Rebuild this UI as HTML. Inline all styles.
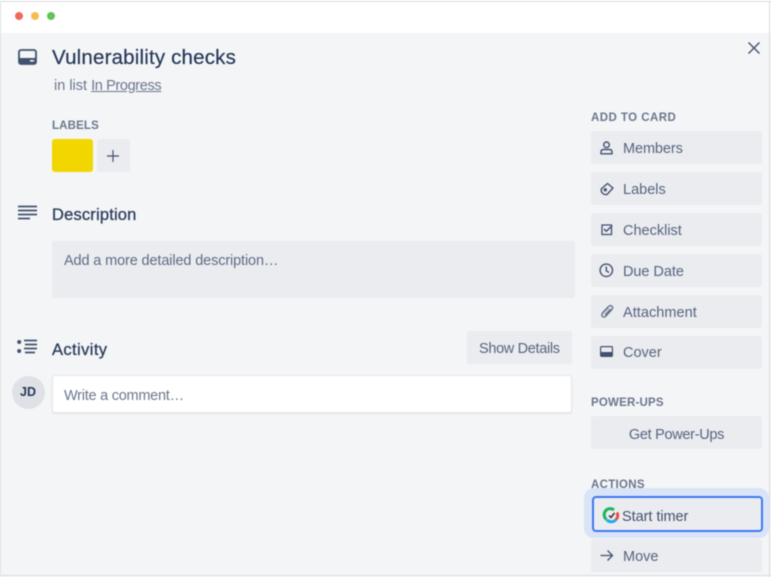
<!DOCTYPE html>
<html><head><meta charset="utf-8"><style>
*{box-sizing:border-box}
html,body{margin:0;padding:0}
body{width:771px;height:577px;overflow:hidden;background:#fff;position:relative;font-family:"Liberation Sans",sans-serif;color:#5a6885}
#w{position:absolute;left:0;top:0;width:771px;height:577px;filter:blur(.4px)}
.a{position:absolute;white-space:nowrap}
.btn{position:absolute;left:591px;width:171px;height:33px;background:#ebecf0;border-radius:3px}
.t{position:absolute;font-size:14.5px;line-height:20px;white-space:nowrap;color:#56647f}
.h{position:absolute;font-size:11.5px;font-weight:700;color:#6b778c;line-height:16px;white-space:nowrap}
.d{position:absolute;top:13px;width:8px;height:8px;border-radius:50%}
svg{position:absolute;overflow:visible}
</style></head><body><div id="w">
<div class="a" style="left:0;top:33px;width:771px;height:544px;background:#f4f5f7"></div>
<div class="a" style="left:0;top:1px;width:771px;height:1px;background:#dcdcdc"></div>
<div class="a" style="left:0;top:1px;width:1px;height:576px;background:#dcdcdc"></div>
<div class="a" style="left:769px;top:1px;width:1px;height:576px;background:#dcdcdc"></div>
<div class="a" style="left:0;top:575px;width:771px;height:1px;background:#dcdcdc"></div>
<div class="d" style="left:15px;top:12px;background:#ee6a5f"></div>
<div class="d" style="left:31px;top:12px;background:#f5bd4f"></div>
<div class="d" style="left:47px;top:12px;background:#61c454"></div>

<svg style="left:18px;top:49px" width="19" height="16"><rect x="1" y="1" width="17" height="14" rx="2" fill="none" stroke="#42526e" stroke-width="1.800"/><rect x="1" y="9" width="17" height="6" fill="#42526e"/><rect x="12" y="11" width="4" height="1.600" fill="#f4f5f7"/></svg>
<div class="a" style="left:52px;top:45px;font-size:20.5px;line-height:26px;color:#253858;letter-spacing:.18px;-webkit-text-stroke:.2px #253858">Vulnerability checks</div>
<div class="a" style="left:54px;top:76px;font-size:14.5px;line-height:20px;color:#6b778c">in list <span style="text-decoration:underline;letter-spacing:-.36px">In Progress</span></div>
<svg style="left:748px;top:42px" width="12" height="12"><path d="M.5 .5L11.500 11.500M11.500 .5L.5 11.500" stroke="#42526e" stroke-width="1.400" fill="none"/></svg>

<div class="h" style="left:52px;top:118px;letter-spacing:.15px">LABELS</div>
<div class="a" style="left:52px;top:139px;width:41px;height:33px;background:#f2d600;border-radius:3px"></div>
<div class="a" style="left:97px;top:139px;width:33px;height:33px;background:#ebecf0;border-radius:3px"></div>
<svg style="left:107px;top:150px" width="12" height="12"><path d="M6 0V12M0 6H12" stroke="#42526e" stroke-width="1.200"/></svg>

<svg style="left:18px;top:205px" width="19" height="15"><path d="M0 1.500H19M0 5.500H19M0 9.500H19M0 13.500H12" stroke="#42526e" stroke-width="1.800"/></svg>
<div class="a" style="left:52px;top:205px;font-size:16.500px;line-height:20px;color:#2c3e5d;letter-spacing:.18px;-webkit-text-stroke:.3px #2c3e5d">Description</div>
<div class="a" style="left:52px;top:241px;width:523px;height:57px;background:#ebecf0;border-radius:3px"></div>
<div class="t" style="left:64px;top:251px;color:#5e6c84;letter-spacing:-.13px">Add a more detailed description…</div>

<svg style="left:17px;top:339px" width="21" height="16"><circle cx="2.200" cy="3" r="2" fill="#42526e"/><circle cx="2.200" cy="12" r="2" fill="#42526e"/><path d="M7 1.500H20M8 5.500H20M7 9.500H20M8 13.500H18" stroke="#42526e" stroke-width="1.800"/></svg>
<div class="a" style="left:52px;top:340px;font-size:16.500px;line-height:20px;color:#2c3e5d;letter-spacing:.4px;-webkit-text-stroke:.3px #2c3e5d">Activity</div>
<div class="a" style="left:467px;top:331px;width:105px;height:33px;background:#ebecf0;border-radius:3px"></div>
<div class="t" style="left:479px;top:339px;letter-spacing:-.33px">Show Details</div>
<div class="a" style="left:12px;top:376px;width:33px;height:33px;border-radius:50%;background:#dfe1e6;font-size:12.500px;font-weight:700;color:#253858;line-height:32px;padding-right:1px;text-align:center">JD</div>
<div class="a" style="left:52px;top:375px;width:520px;height:38px;background:#fff;border-radius:3px;box-shadow:0 0 0 1px #e4e6ea inset,0 1px 1px #dfe1e6"></div>
<div class="t" style="left:64px;top:386px;color:#6b778c;letter-spacing:-.25px">Write a comment…</div>

<div class="h" style="left:591px;top:109.500px;letter-spacing:.45px">ADD TO CARD</div>
<div class="btn" style="top:131px"></div><div class="t" style="left:623px;top:139px;letter-spacing:-.1px">Members</div>
<svg style="left:600px;top:141px" width="13" height="14"><circle cx="6.500" cy="3.800" r="2.800" fill="none" stroke="#42526e" stroke-width="1.400"/><path d="M1 12.800V11Q1 8.500 3.500 8.500H9.500Q12 8.500 12 11V12.800Z" fill="none" stroke="#42526e" stroke-width="1.400"/></svg>
<div class="btn" style="top:172px"></div><div class="t" style="left:623px;top:180px">Labels</div>
<svg style="left:600px;top:182px" width="14" height="14"><path d="M1.200 7L7.500 1.500L13 6L7 12.500Q3.500 13 1.500 10Z" fill="none" stroke="#42526e" stroke-width="1.400" stroke-linejoin="round"/><circle cx="5.300" cy="7.800" r="1.700" fill="#42526e"/></svg>
<div class="btn" style="top:213px"></div><div class="t" style="left:623px;top:220.500px">Checklist</div>
<svg style="left:601px;top:224px" width="12" height="12"><path d="M1 1H10.500V10.500H1Z" fill="none" stroke="#42526e" stroke-width="1.300"/><path d="M3 5L5.300 7.300L11 1.800" fill="none" stroke="#42526e" stroke-width="1.400"/></svg>
<div class="btn" style="top:254px"></div><div class="t" style="left:623px;top:262px;letter-spacing:-.05px">Due Date</div>
<svg style="left:599px;top:263px" width="15" height="15"><circle cx="7.300" cy="7.300" r="6.200" fill="none" stroke="#42526e" stroke-width="1.400"/><path d="M7.300 3.500V7.800L10 9.500" fill="none" stroke="#42526e" stroke-width="1.400"/></svg>
<div class="btn" style="top:295px"></div><div class="t" style="left:623px;top:303px;letter-spacing:.05px">Attachment</div>
<svg style="left:600px;top:304px" width="14" height="15"><path d="M2 9.500L8.500 2.500Q10.500 .8 12 2.300T11.500 6L6 12Q4 13.800 2.500 12.500T2.800 9L8.300 3.500M5 11L10.500 5" fill="none" stroke="#6b778c" stroke-width="1.400"/></svg>
<div class="btn" style="top:336px"></div><div class="t" style="left:623px;top:343px">Cover</div>
<svg style="left:600px;top:346px" width="13" height="11"><rect x=".6" y=".6" width="11.800" height="9.800" rx="1" fill="none" stroke="#42526e" stroke-width="1.200"/><rect x="1" y="6" width="11" height="4.500" fill="#42526e"/></svg>

<div class="h" style="left:591px;top:395px;letter-spacing:.2px">POWER-UPS</div>
<div class="btn" style="top:416px"></div><div class="t" style="left:591px;width:171px;text-align:center;top:425px;letter-spacing:-.3px">Get Power-Ups</div>

<div class="h" style="left:591px;top:477px;letter-spacing:.3px">ACTIONS</div>
<div class="a" style="left:584px;top:488px;width:185px;height:50px;background:#d9e4f8;border-radius:10px"></div>
<div class="a" style="left:592px;top:496px;width:171px;height:36px;background:#ebecf0;border:2px solid #3f78f0;border-radius:4px"></div>
<svg style="left:604px;top:508px" width="15" height="15"><path d="M2.500 11.500A6 6 0 0 1 10 1.900" fill="none" stroke="#1fb45f" stroke-width="3"/><path d="M2.800 11.800A6 6 0 0 0 12 11.500" fill="none" stroke="#22a7e8" stroke-width="3"/><path d="M12 11.500A6 6 0 0 0 13 4.500" fill="none" stroke="#ef4a3c" stroke-width="3"/><path d="M5 7.500L7 9.500L10.500 5" fill="none" stroke="#333" stroke-width="1.500"/></svg>
<div class="t" style="left:622px;top:507px;color:#42526e;letter-spacing:-.05px">Start timer</div>
<div class="btn" style="top:539px"></div><div class="t" style="left:623px;top:547px">Move</div>
<svg style="left:600px;top:549px" width="13" height="13"><path d="M.5 6.500H12M7.500 1.500L12.500 6.500L7.500 11.500" fill="none" stroke="#42526e" stroke-width="1.300"/></svg>
</div></body></html>
